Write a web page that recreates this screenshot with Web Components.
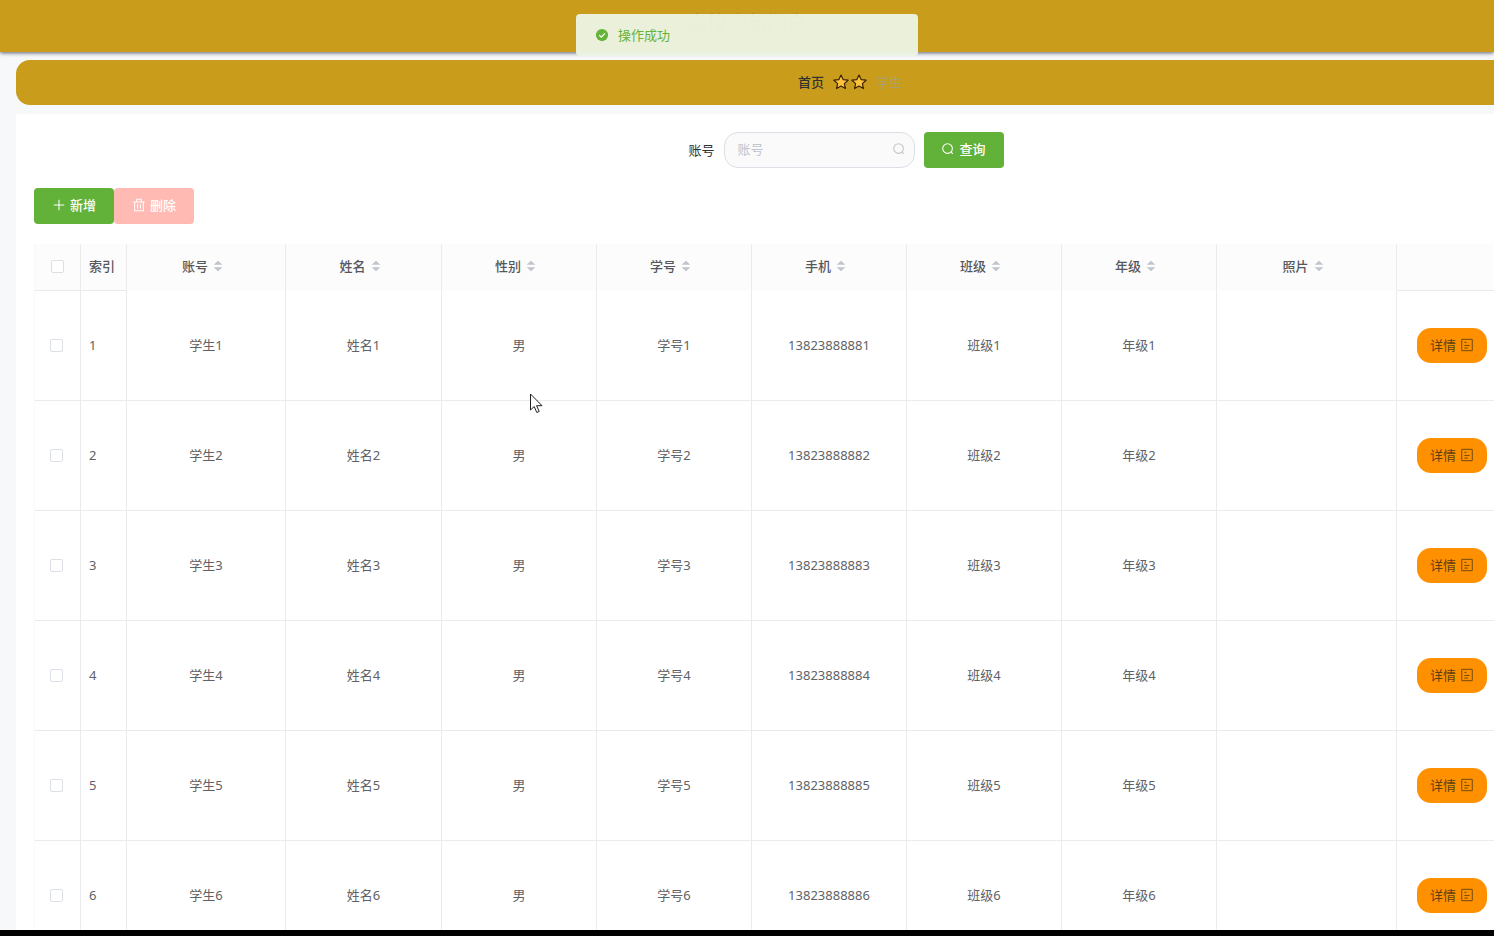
<!DOCTYPE html>
<html lang="zh-CN">
<head>
<meta charset="utf-8">
<title>学生管理</title>
<style>
html{height:100%;background:#000}
body{margin:0;height:100%;box-sizing:border-box;padding-bottom:6px;overflow:hidden;font:13px/20px "Noto Sans","Noto Sans CJK SC",sans-serif;color:#606266}
</style>
</head>
<body>
<admin-page></admin-page>
<script>
const define = (name, html, setup) => {
  const t = document.createElement('template');
  t.innerHTML = html;
  customElements.define(name, class extends HTMLElement {
    constructor() {
      super();
      this.attachShadow({mode: 'open'}).append(t.content.cloneNode(true));
    }
    connectedCallback() { if (setup && !this.ready) { this.ready = true; setup(this, this.shadowRoot); } }
  });
};

const icons = {
  search: '<circle cx="7.5" cy="7.5" r="5.5"/><path d="M11.5 11.5l2 2"/>',
  plus: '<path d="M8 2v12M2 8h12"/>',
  trash: '<path d="M1.5 4.5h13M5.5 4V1.5h5V4M3 4.5v10h10v-10M6.3 7v5M9.7 7v5"/>',
  doc: '<path d="M2 1.500h12v13H2zM5 5h2.500M5 8.500h6M5 11.500h4" stroke-width="1"/>',
  star: '<path d="M8 1l2.100 4.600 5 .6-3.700 3.400 1 5L8 12.100l-4.400 2.500 1-5L.9 6.200l5-.6z" fill="#ffc23d" stroke="#3b2205" stroke-linejoin="round"/>',
  check: '<circle cx="8" cy="8" r="7" fill="#67b33a" stroke="none"/><path d="M4.800 8.200l2.400 2.300 4.200-4.400" stroke="#fff" stroke-width="1.400"/>',
  sort: '<path d="M8 2l5 4.500H3zM8 14l5-4.500H3z" fill="#c0c4cc" stroke="none"/>'
};
define('ui-icon', `<style>
:host{display:inline-flex;width:14px;height:14px;flex:none}
svg{width:100%;height:100%;fill:none;stroke:currentColor;stroke-width:1.2}
</style><svg viewBox="0 0 16 16" aria-hidden="true"></svg>`,
(el, root) => { root.querySelector('svg').innerHTML = icons[el.getAttribute('name')]; });

define('ui-button', `<style>
:host{display:inline-flex}
button{display:flex;align-items:center;justify-content:center;gap:4px;height:36px;width:80px;padding:0 0 2px;border:0;border-radius:4px;background:#62b138;color:#fff;font:inherit;font-weight:500}
:host([kind=danger]) button{background:#ffbab3}
:host([kind=detail]) button{width:70px;height:35px;border-radius:14px;background:#ff9100;color:#5e4012;font-weight:400}
</style><button type="button"><slot></slot></button>`,
(el, root) => { if (el.hasAttribute('disabled')) root.querySelector('button').disabled = true; });

define('top-bar', `<style>
:host{display:flex;justify-content:center;align-items:center;height:52px;flex:none;box-sizing:border-box;padding-bottom:4px;background:#c99d1b;box-shadow:0 1px 4px #5a5f70;position:relative}
h1{margin:0;font-size:20px;line-height:24px;font-weight:400;color:#997c24}
</style><h1><slot></slot></h1>`);

define('success-toast', `<style>
:host{position:absolute;z-index:3;top:14px;left:50%;transform:translateX(-50%);width:342px;height:42px;box-sizing:border-box;padding:0 19px;display:flex;align-items:center;gap:9px;border-radius:4px;background:#edf4e5f2;color:#67b33a}
</style><ui-icon name="check"></ui-icon><span role="status"><slot></slot></span>`);

define('bread-crumb', `<style>
:host{display:block}
nav{display:flex;align-items:center;justify-content:center;height:45px;box-sizing:border-box;padding:0 0 2px 8px;background:#c99d1b;border-radius:14px;gap:9px}
a{color:#303133;text-decoration:none;font-weight:500}
.stars{display:flex;gap:2px}
.stars ui-icon{width:16px;height:16px}
span{color:#aba16b}
</style><nav aria-label="导航"><a href="#">首页</a><div class="stars"><ui-icon name="star"></ui-icon><ui-icon name="star"></ui-icon></div><span>学生</span></nav>`);

define('search-form', `<style>
:host{display:block}
form{display:flex;align-items:center;justify-content:center;gap:9px}
label{color:#303133}
.field{display:flex;align-items:center;width:191px;height:36px;box-sizing:border-box;border:1px solid #dcdfe6;border-radius:14px;background:#fafafa;padding:0 8px 2px 13px;color:#c0c4cc}
input{flex:1;min-width:0;border:0;padding:0;background:none;outline:0;font:inherit}
input::placeholder{color:#c0c4cc}
</style><form><label for="account">账号</label><div class="field"><input id="account" placeholder="账号"><ui-icon name="search"></ui-icon></div><ui-button><ui-icon name="search"></ui-icon>查询</ui-button></form>`);

define('student-table', `<style>
:host{display:block}
table{border-collapse:separate;border-spacing:0;table-layout:fixed;width:100%;border-left:1px solid #f8f8fa}
th,td{box-sizing:border-box;padding:0 8px 2px;border-right:1px solid #ebebee;border-bottom:1px solid #ebebee;text-align:center;font-weight:400}
th{height:47px;background:#fcfcfc;color:#55575c;font-weight:500}
th.sortable{border-bottom-color:#fcfcfc}
td{height:110px}
.num{text-align:left}
.pick{padding:0 10px 0 8px}
.ops{text-align:left;padding:0 0 0 20px}
.ops ui-button{vertical-align:middle}
.head{display:flex;align-items:center;justify-content:center;gap:3px;padding-right:5px}
input{appearance:none;display:block;width:13px;height:13px;margin:0 auto;border:1px solid #dcdfe6;border-radius:2px;background:#fff}
.c1,.c2{width:46px}.c3{width:159px}.c4{width:156px}.c5{width:155px}.c6{width:180px}
</style><table><colgroup><col class="c1"><col class="c2"><col class="c3"><col class="c4"><col class="c5"><col class="c5"><col class="c5"><col class="c5"><col class="c5"><col class="c6"><col></colgroup><thead><tr><th><input type="checkbox" aria-label="全选"></th><th class="num">索引</th></tr></thead><tbody></tbody></table>`,
(el, root) => {
  const head = root.querySelector('thead tr');
  for (const name of ['账号','姓名','性别','学号','手机','班级','年级','照片'])
    head.insertAdjacentHTML('beforeend', `<th class="sortable"><div class="head">${name}<ui-icon name="sort"></ui-icon></div></th>`);
  head.insertAdjacentHTML('beforeend', '<th></th>');
  const body = root.querySelector('tbody');
  for (let i = 1; i <= 6; i++)
    body.insertAdjacentHTML('beforeend', `<tr><td class="pick"><input type="checkbox" aria-label="选择第${i}行"></td><td class="num">${i}</td><td>学生${i}</td><td>姓名${i}</td><td>男</td><td>学号${i}</td><td>1382388888${i}</td><td>班级${i}</td><td>年级${i}</td><td></td><td class="ops"><ui-button kind="detail">详情<ui-icon name="doc"></ui-icon></ui-button></td></tr>`);
});

define('mouse-pointer', `<style>
:host{position:absolute;z-index:4;left:530px;top:393px;width:13px;height:21px}
svg{display:block;width:100%;height:100%}
</style><svg viewBox="0 0 13 21" aria-hidden="true"><path d="M.5 1v16l3.700-3.500 2.600 6 2.400-1-2.600-5.800H12z" fill="#fff" stroke="#222"/></svg>`);

define('admin-page', `<style>
:host{display:flex;flex-direction:column;height:100%;overflow:hidden;position:relative;background:#f7f8fa}
main{margin:8px -182px 0 16px;flex:1;min-height:0}
.card{margin-top:9px;padding:18px;background:#fff}
.actions{display:flex;margin:20px 0}
</style>
<top-bar>高校迎新门户</top-bar>
<success-toast>操作成功</success-toast>
<main><bread-crumb></bread-crumb>
<section class="card"><search-form></search-form>
<div class="actions"><ui-button><ui-icon name="plus"></ui-icon>新增</ui-button><ui-button kind="danger" disabled><ui-icon name="trash"></ui-icon>删除</ui-button></div>
<student-table></student-table></section></main>
<mouse-pointer></mouse-pointer>`);
</script>
</body>
</html>
